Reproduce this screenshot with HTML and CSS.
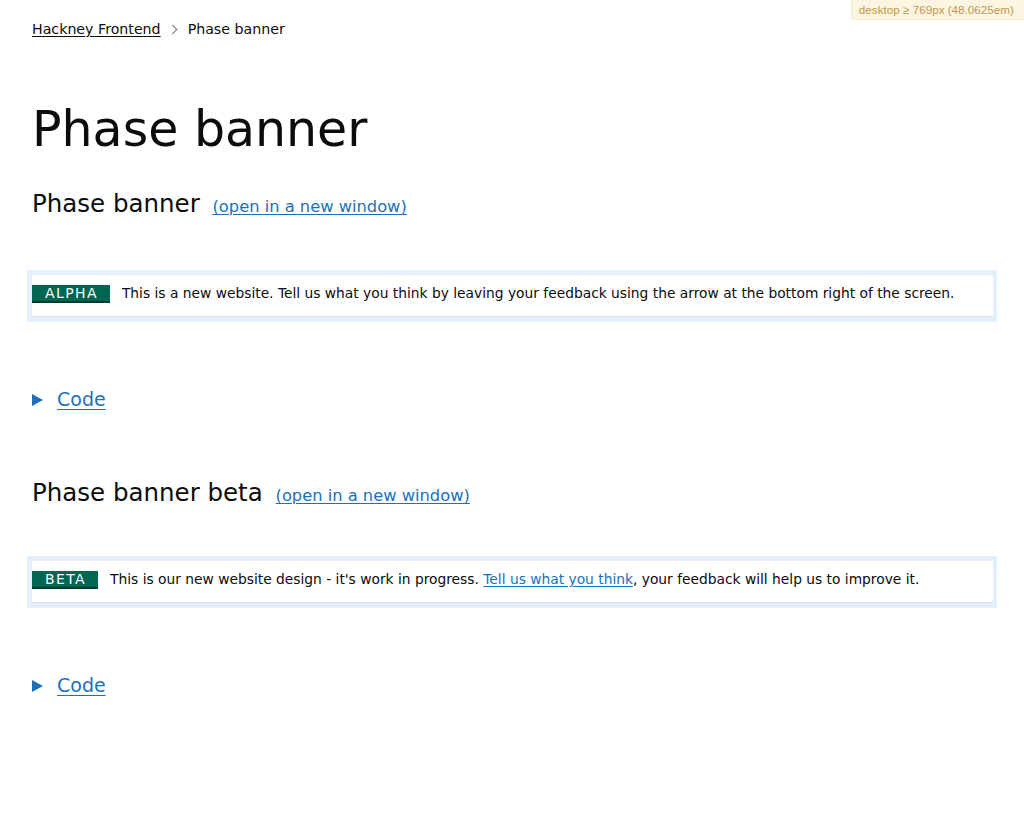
FILE: index.html
```html
<!DOCTYPE html>
<html lang="en">
<head>
<meta charset="utf-8">
<title>Phase banner</title>
<link rel="stylesheet" href="styles.css">
</head>
<body>
<div class="mq-indicator">desktop ≥ 769px (48.0625em)</div>
<main class="page">
  <nav class="breadcrumbs">
    <a class="breadcrumbs__link" href="#">Hackney Frontend</a>
    <span class="breadcrumbs__chevron"></span>
    <span class="breadcrumbs__current">Phase banner</span>
  </nav>

  <h1 class="page-title">Phase banner</h1>

  <section class="example">
    <h2 class="example__title">Phase banner <a class="example__open" href="#">(open in a new window)</a></h2>
    <div class="example__frame">
      <div class="phase-banner">
        <strong class="phase-tag">ALPHA</strong>
        <span class="phase-banner__text">This is a new website. Tell us what you think by leaving your feedback using the arrow at the bottom right of the screen.</span>
      </div>
    </div>
    <details class="code-details">
      <summary class="code-details__summary"><span class="code-details__arrow"></span><span class="code-details__label">Code</span></summary>
    </details>
  </section>

  <section class="example example--second">
    <h2 class="example__title">Phase banner beta <a class="example__open" href="#">(open in a new window)</a></h2>
    <div class="example__frame">
      <div class="phase-banner">
        <strong class="phase-tag">BETA</strong>
        <span class="phase-banner__text">This is our new website design - it's work in progress. <a class="phase-banner__link" href="#">Tell us what you think</a>, your feedback will help us to improve it.</span>
      </div>
    </div>
    <details class="code-details">
      <summary class="code-details__summary"><span class="code-details__arrow"></span><span class="code-details__label">Code</span></summary>
    </details>
  </section>
</main>
</body>
</html>
```

FILE: styles.css
```css
html, body {
  margin: 0;
  padding: 0;
  background: #ffffff;
}

body {
  font-family: "DejaVu Sans", "Noto Sans", sans-serif;
  color: #0b0c0c;
}

.mq-indicator {
  position: fixed;
  top: 0;
  right: 0;
  background: #fcf5e2;
  color: #c4964e;
  border-left: 1px solid #f5e9cf;
  border-bottom: 1px solid #f5e9cf;
  font-family: "Liberation Sans", Arial, sans-serif;
  font-size: 11.7px;
  line-height: 19px;
  padding: 0 10px 0 7px;
}

.page {
  padding: 19px 32px 0 32px;
}

.breadcrumbs {
  display: flex;
  align-items: center;
  font-size: 14.2px;
  line-height: 20px;
}

.breadcrumbs__link {
  color: #0b0c0c;
  text-decoration: underline;
  text-underline-offset: 2px;
}

.breadcrumbs__chevron {
  display: inline-block;
  width: 6px;
  height: 6px;
  border-top: 1px solid #6f777b;
  border-right: 1px solid #6f777b;
  transform: rotate(45deg);
  margin: 0 12px 0 8px;
}

.page-title {
  margin: 63px 0 0;
  font-size: 49px;
  line-height: 56px;
  font-weight: 400;
}

.example__title {
  margin: 31px 0 0;
  font-size: 24.5px;
  line-height: 30px;
  font-weight: 400;
}

.example--second .example__title {
  margin-top: 66px;
}

.example__open {
  font-size: 16.3px;
  line-height: 16px;
  color: #1d70b8;
  margin-left: 5px;
  text-underline-offset: 2px;
}

.example__frame {
  margin: 51px -5px 0;
  border: 5px solid #e4effd;
  border-right-width: 4px;
  background: #ffffff;
}

.example--second .example__frame {
  margin-top: 48px;
}

.phase-banner {
  display: flex;
  align-items: flex-start;
  padding: 10px 0 13px;
  border-bottom: 1px solid #dde1e6;
  font-size: 13.8px;
}

.phase-tag {
  display: block;
  background: #00664f;
  color: #ffffff;
  font-weight: 400;
  font-size: 14px;
  line-height: 15px;
  letter-spacing: 1.4px;
  padding: 1px 12px 0 13px;
  border-bottom: 2px solid #003b2f;
  margin-right: 12px;
}

.phase-banner__text {
  display: block;
  line-height: 16px;
  color: #0b0c0c;
}

.phase-banner__link {
  color: #1d70b8;
  text-underline-offset: 2px;
}

.code-details {
  margin-top: 65px;
}

.code-details__summary {
  list-style: none;
  display: flex;
  align-items: center;
  font-size: 19px;
  line-height: 25px;
  color: #1d70b8;
  cursor: pointer;
}

.code-details__summary::-webkit-details-marker {
  display: none;
}

.code-details__arrow {
  width: 0;
  height: 0;
  border-style: solid;
  border-width: 6.5px 0 6.5px 11px;
  border-color: transparent transparent transparent #1d70b8;
  margin-right: 14px;
}

.code-details__label {
  text-decoration: underline;
  text-underline-offset: 3px;
}
```
